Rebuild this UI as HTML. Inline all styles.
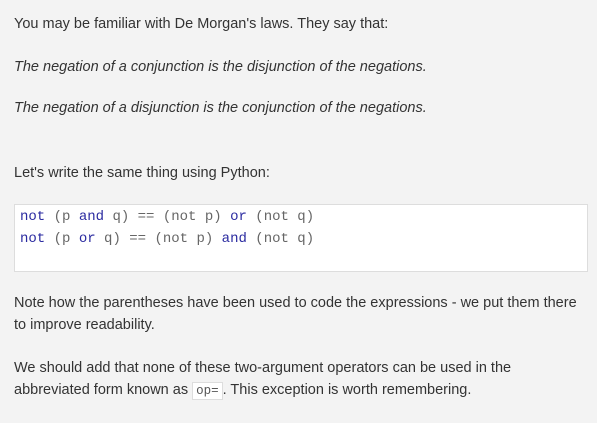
<!DOCTYPE html>
<html><head><style>
body{margin:0;background:#f3f3f3;width:597px;height:423px;overflow:hidden;font-family:"Liberation Sans",sans-serif;font-size:14.5px;color:#333;}
.t{position:absolute;left:14px;white-space:nowrap;}
i{font-style:italic;}
.code{position:absolute;left:14px;top:204px;width:572px;height:66px;background:#fff;border:1px solid #ddd;font-family:"Liberation Mono",monospace;font-size:14px;color:#666;}
.code div{position:absolute;left:5px;white-space:pre;}
.k{color:#2a2aa0;}
code{font-family:"Liberation Mono",monospace;font-size:12.5px;background:#fff;border:1px solid #ddd;padding:1px 3px;color:#555;}
</style></head><body>
<div class="t" style="top:16px">You may be familiar with De Morgan's laws. They say that:</div>
<div class="t" style="top:59px"><i>The negation of a conjunction is the disjunction of the negations.</i></div>
<div class="t" style="top:100px"><i>The negation of a disjunction is the conjunction of the negations.</i></div>
<div class="t" style="top:165px">Let's write the same thing using Python:</div>
<div class="code">
<div style="top:4px"><span class="k">not</span> (p <span class="k">and</span> q) == (not p) <span class="k">or</span> (not q)</div>
<div style="top:26px"><span class="k">not</span> (p <span class="k">or</span> q) == (not p) <span class="k">and</span> (not q)</div>
</div>
<div class="t" style="top:295px">Note how the parentheses have been used to code the expressions - we put them there</div>
<div class="t" style="top:317px">to improve readability.</div>
<div class="t" style="top:360px">We should add that none of these two-argument operators can be used in the</div>
<div class="t" style="top:382px">abbreviated form known as <code>op=</code>. This exception is worth remembering.</div>
</body></html>
